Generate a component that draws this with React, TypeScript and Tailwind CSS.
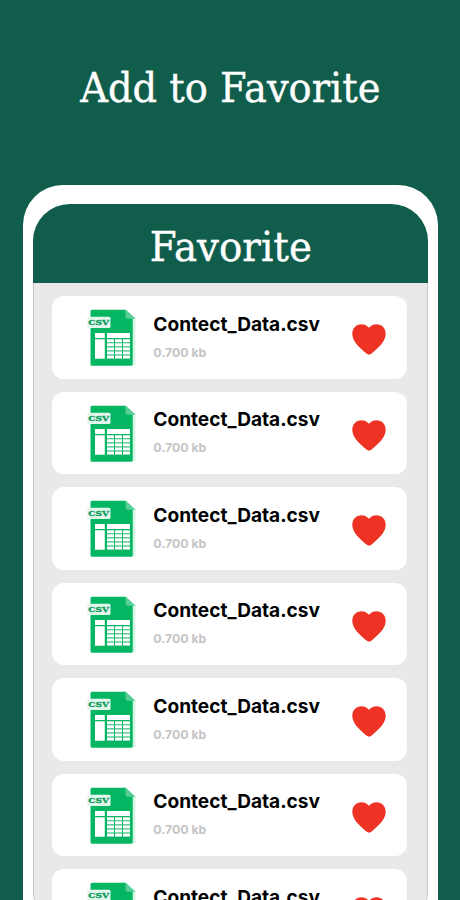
const files = Array.from({ length: 7 }, (_, id) => ({
  id,
  name: "Contect_Data.csv",
  size: "0.700 kb",
}));

const cellColumns = [27, 35, 43];
const cellRows = [39.3, 43.3, 47.4, 51.5, 55.6];

const CsvIcon = () => (
  <svg viewBox="0 0 64 72" className="h-[72px] w-16 shrink-0" aria-hidden="true">
    <path d="M52 18h3.3v47H52z" fill="#d2f5e4" />
    <path
      d="M12 9.7h33.5L52.7 17v47.3a1.5 1.5 0 0 1-1.5 1.5H12a1.5 1.5 0 0 1-1.5-1.5V11.2A1.5 1.5 0 0 1 12 9.7z"
      fill="#04b562"
    />
    <path d="M45.5 9.5 55.7 18.8H48A2.5 2.5 0 0 1 45.5 16.3z" fill="#58cd95" />
    <rect x="7.3" y="16.7" width="23.2" height="11.3" rx="1.5" fill="#e2f6ec" />
    <text
      x="8.3"
      y="25"
      fontFamily="'DejaVu Serif', serif"
      fontSize="8.2"
      fontWeight="700"
      textLength="20.7"
      lengthAdjust="spacingAndGlyphs"
      fill="#0a9a58"
      stroke="#0a9a58"
      strokeWidth="0.3"
    >
      CSV
    </text>
    <path d="M15 33h9.8v5H15zM27 33h23v5H27zM15 39.3h9.8v19.4H15z" fill="#fff" />
    <path d="M27 39.3h7v19.4h-7zM35 39.3h7v19.4h-7zM43 39.3h7v19.4h-7z" fill="#2fc17f" />
    {cellRows.map((y) =>
      cellColumns.map((x) => (
        <rect key={`${x}-${y}`} x={x} y={y} width="7" height="2.9" fill="#fff" />
      ))
    )}
  </svg>
);

const HeartIcon = () => (
  <svg viewBox="0 0 34 31" className="h-[31px] w-[34px] shrink-0" aria-hidden="true">
    <path
      d="M17 3.8C14.8 1.4 12.3.3 9.5.3 4.2.3.3 4.4.3 9.8c0 8.2 8 14.4 14.1 19.7 1.7 1.5 3.5 1.5 5.2 0C25.7 24.2 33.7 18 33.7 9.8c0-5.4-3.9-9.5-9.2-9.5-2.8 0-5.3 1.1-7.5 3.5z"
      fill="#ee3224"
    />
  </svg>
);

const FileCard = ({ name, size }: { name: string; size: string }) => (
  <li className="flex h-[82.5px] shrink-0 items-start rounded-xl bg-white pl-7 pr-[21.5px]">
    <div className="pt-1">
      <CsvIcon />
    </div>
    <div className="ml-[9.3px] flex-1 whitespace-nowrap pt-[14.5px]">
      <p className="text-[19.1px] font-bold leading-[26px] text-black">{name}</p>
      <p className="mt-2 text-[12.3px] font-bold leading-4 text-[#c4c4c4]">{size}</p>
    </div>
    <div className="pt-7">
      <HeartIcon />
    </div>
  </li>
);

export default function App() {
  return (
    <main className="flex h-[900px] w-[460px] flex-col overflow-hidden bg-[#0f5d4a] font-['Inter',sans-serif]">
      <h1 className="flex h-[185px] shrink-0 justify-center whitespace-nowrap pt-[58px] font-['DejaVu_Serif',serif] text-[41.5px] leading-[60px] text-white">
        <span className="inline-block scale-x-[0.925] [-webkit-text-stroke:0.4px_white]">
          Add to Favorite
        </span>
      </h1>
      <section className="ml-[23px] h-[715px] w-[415px] rounded-t-[40px] bg-white px-2.5 pt-[19px]">
        <div className="flex h-[710px] flex-col overflow-hidden rounded-t-[37px] rounded-b-[20px]">
          <h2 className="flex h-[79px] shrink-0 justify-center bg-[#0f5d4a] pt-[13px] font-['DejaVu_Serif',serif] text-[41.5px] leading-[60px] text-white">
            <span className="inline-block scale-x-[0.935] [-webkit-text-stroke:0.4px_white]">
              Favorite
            </span>
          </h2>
          <ul className="flex flex-1 flex-col gap-[13px] overflow-hidden rounded-b-[20px] border-x border-[#c4c4c4] bg-[#e9e9e9] pl-[18px] pr-5 pt-[13px]">
            {files.map((file) => (
              <FileCard key={file.id} name={file.name} size={file.size} />
            ))}
          </ul>
        </div>
      </section>
    </main>
  );
}
